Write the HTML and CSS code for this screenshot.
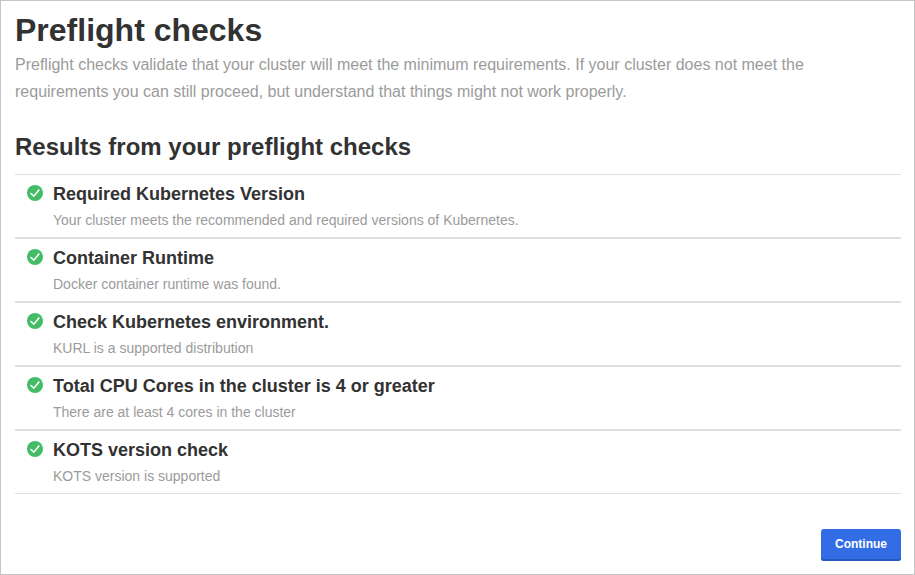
FILE: index.html
```html
<!DOCTYPE html>
<html lang="en">
<head>
<meta charset="utf-8">
<title>Preflight checks</title>
<link rel="stylesheet" href="styles.css">
</head>
<body>
<svg width="0" height="0" class="defs"><symbol id="check" viewBox="0 0 16 16"><circle cx="8" cy="8" r="8" fill="#44bb66"/><path d="M3.6 8.1 6.8 11.2 12.3 4.6" fill="none" stroke="#fff" stroke-width="1.6"/></symbol></svg>
<main class="page">
<h1>Preflight checks</h1>
<p class="intro">Preflight checks validate that your cluster will meet the minimum requirements. If your cluster does not meet the requirements you can still proceed, but understand that things might not work properly.</p>
<h2>Results from your preflight checks</h2>
<div class="results">
<div class="row"><svg class="icon"><use href="#check"/></svg><div><h3>Required Kubernetes Version</h3><p>Your cluster meets the recommended and required versions of Kubernetes.</p></div></div>
<div class="row"><svg class="icon"><use href="#check"/></svg><div><h3>Container Runtime</h3><p>Docker container runtime was found.</p></div></div>
<div class="row"><svg class="icon"><use href="#check"/></svg><div><h3>Check Kubernetes environment.</h3><p>KURL is a supported distribution</p></div></div>
<div class="row"><svg class="icon"><use href="#check"/></svg><div><h3>Total CPU Cores in the cluster is 4 or greater</h3><p>There are at least 4 cores in the cluster</p></div></div>
<div class="row"><svg class="icon"><use href="#check"/></svg><div><h3>KOTS version check</h3><p>KOTS version is supported</p></div></div>
</div>
<div class="actions"><button type="button">Continue</button></div>
</main>
</body>
</html>
```
FILE: styles.css
```css
* { box-sizing: border-box; margin: 0; padding: 0; }
body { font-family: "Liberation Sans", Arial, sans-serif; color: #323232; background: #fff; }
.defs { display: none; }
.page { height: 575px; border: 1px solid #c4c4c4; padding: 11px 13px 0 14px; }
h1 { font-size: 32px; line-height: 36px; }
.intro { font-size: 16px; line-height: 27px; color: #9b9b9b; margin-top: 3px; width: 830px; }
h2 { font-size: 24px; line-height: 28px; margin-top: 28px; }
.results { margin-top: 13px; border-top: 1px solid #dfdfdf; border-bottom: 1px solid #dfdfdf; }
.row { display: flex; height: 64px; padding: 8px 12px 0; border-bottom: 2px solid #dfdfdf; }
.row:last-child { height: 62px; border-bottom: 0; }
.icon { width: 16px; height: 16px; margin: 2px 10px 0 0; flex: none; }
h3 { font-size: 18px; line-height: 22px; }
.row p { font-size: 14px; line-height: 18px; color: #9b9b9b; margin-top: 6px; }
.actions { display: flex; justify-content: flex-end; margin-top: 35px; }
button { width: 80px; height: 32px; border: 0; border-radius: 3px; padding-bottom: 2px; background: #326de6; box-shadow: inset 0 -2px 0 #2458bd; color: #fff; font: bold 12px "Liberation Sans", Arial, sans-serif; }
```
